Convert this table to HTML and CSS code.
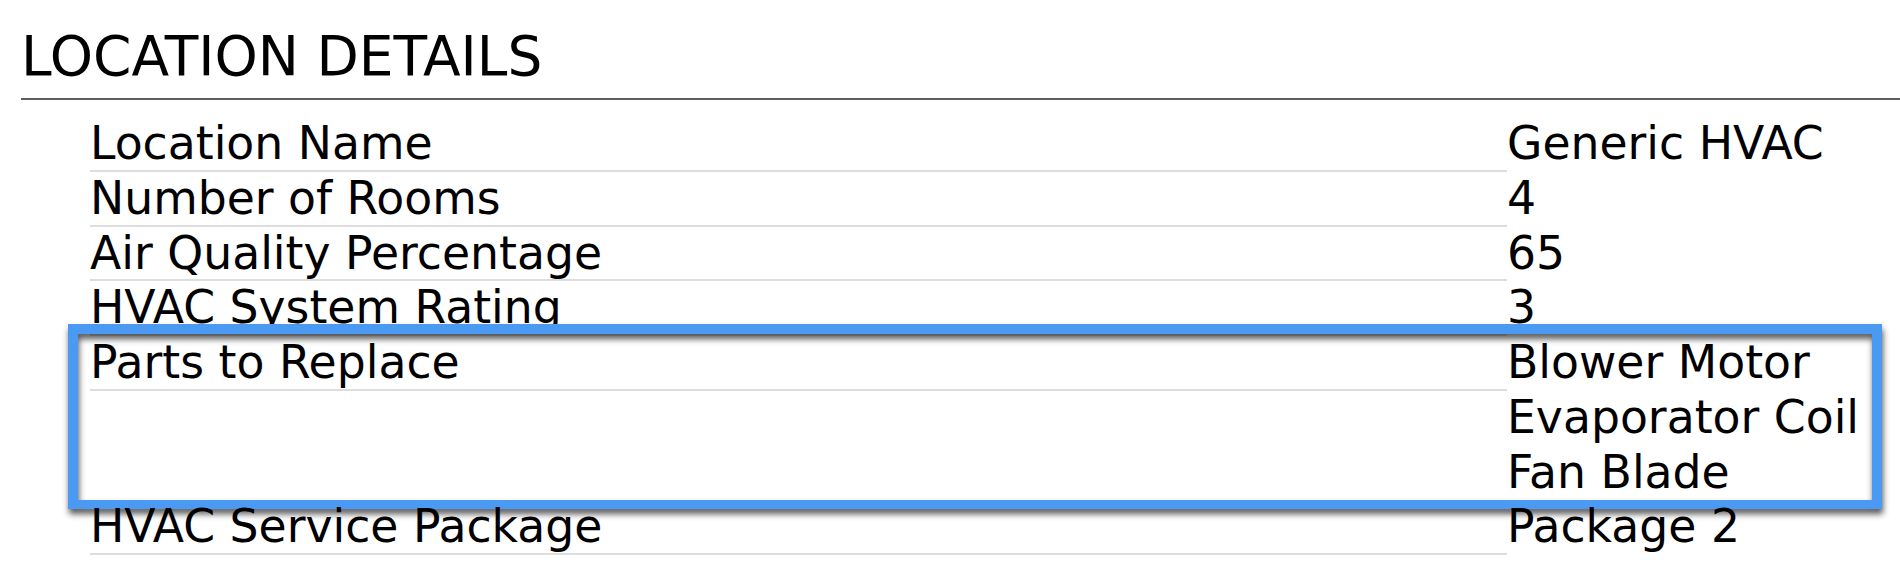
FILE: index.html
```html
<!DOCTYPE html>
<html lang="en">
<head>
<meta charset="utf-8">
<title>Location Details</title>
<link rel="stylesheet" href="styles.css">
</head>
<body>
<section class="details">
  <h2 class="title">LOCATION DETAILS</h2>
  <div class="rows">
    <div class="row">
      <div class="label">Location Name</div>
      <div class="value"><div class="item">Generic HVAC</div></div>
    </div>
    <div class="row">
      <div class="label">Number of Rooms</div>
      <div class="value"><div class="item">4</div></div>
    </div>
    <div class="row">
      <div class="label">Air Quality Percentage</div>
      <div class="value"><div class="item">65</div></div>
    </div>
    <div class="row">
      <div class="label">HVAC System Rating</div>
      <div class="value"><div class="item">3</div></div>
    </div>
    <div class="row row-highlighted">
      <div class="label">Parts to Replace</div>
      <div class="value">
        <div class="item">Blower Motor</div>
        <div class="item">Evaporator Coil</div>
        <div class="item">Fan Blade</div>
      </div>
      <div class="highlight"></div>
    </div>
    <div class="row">
      <div class="label">HVAC Service Package</div>
      <div class="value"><div class="item">Package 2</div></div>
    </div>
  </div>
</section>
</body>
</html>
```
FILE: styles.css
```css
html, body {
  margin: 0;
  padding: 0;
  background: #ffffff;
}

body {
  font-family: "DejaVu Sans", Verdana, sans-serif;
  color: #000000;
  width: 1900px;
  height: 580px;
  overflow: hidden;
}

.details {
  padding: 25px 0 0 21px;
}

.title {
  margin: 0;
  font-size: 55px;
  font-weight: normal;
  line-height: 63px;
  padding-bottom: 10px;
  border-bottom: 2px solid #5e5e5e;
}

.rows {
  margin: 17.3px 0 0 69px;
}

.row {
  position: relative;
  display: flex;
  align-items: flex-start;
  font-size: 45.7px;
  line-height: 51.7px;
}

.label {
  flex: 0 0 1417px;
  padding-top: 1px;
  border-bottom: 2px solid #dddddd;
  white-space: nowrap;
}

.value {
  flex: 1 1 auto;
}

.item {
  padding: 1px 0 2px;
  white-space: nowrap;
}

.highlight {
  position: absolute;
  top: -12px;
  bottom: -9px;
  left: -22px;
  right: 18px;
  border: 10px solid #4a9af4;
  border-bottom-width: 9px;
  background: transparent;
  filter: drop-shadow(1px 5px 3px rgba(0, 0, 0, 0.65));
  pointer-events: none;
}
```
